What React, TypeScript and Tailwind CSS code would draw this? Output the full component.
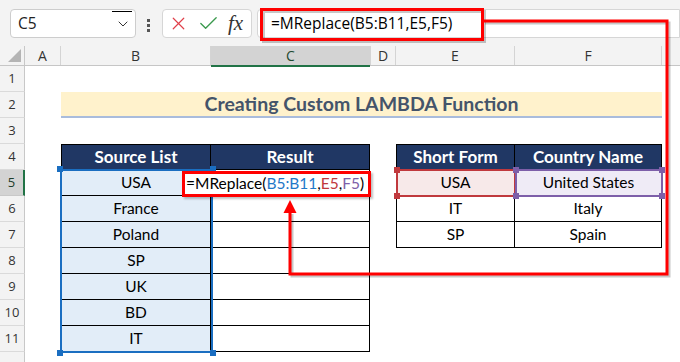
import { ChevronDown, X, Check } from "lucide-react"

// one spreadsheet row: header cell + cells
function Row({ n, active, children, h = "h-[26px]" }: { n?: number; active?: boolean; children?: React.ReactNode; h?: string }) {
  return (
    <div className={`flex ${h}`}>
      <div
        className={
          active
            ? "w-[25px] h-full flex items-center justify-center text-[13px] text-[#1f3d2b] bg-[#d3d3d3] border-r-2 border-r-[#217346] border-b border-b-[#c8c8c8] font-[family-name:Open_Sans,sans-serif]"
            : "w-[25px] h-full flex items-center justify-center text-[13px] text-[#333] bg-[#f3f3f3] border-r border-r-[#c8c8c8] border-b border-b-[#dadada] font-[family-name:Open_Sans,sans-serif]"
        }
      >
        {n}
      </div>
      {children}
    </div>
  )
}

const A = <div className="w-[36px] h-full" />
const D = <div className="w-[26px] h-full" />

function BCell({ text, head }: { text?: string; head?: boolean }) {
  if (head)
    return (
      <div className="w-[150px] h-full flex items-center justify-center bg-[#203764] text-white font-bold text-[17px] border border-black">
        {text}
      </div>
    )
  return (
    <div className="w-[150px] h-full flex items-center justify-center bg-[#e2edf8] text-[15.5px] text-black border-l border-r border-b border-black">
      {text}
    </div>
  )
}

function CCell({ head }: { head?: boolean }) {
  if (head)
    return (
      <div className="w-[159px] h-full flex items-center justify-center bg-[#203764] text-white font-bold text-[17px] border-t border-r border-b border-black">
        Result
      </div>
    )
  return <div className="w-[159px] h-full border-r border-b border-black" />
}

function ECell({ text, head }: { text: string; head?: boolean }) {
  if (head)
    return (
      <div className="w-[119px] h-full flex items-center justify-center bg-[#203764] text-white font-bold text-[17px] border border-black">
        {text}
      </div>
    )
  return (
    <div className="w-[119px] h-full flex items-center justify-center text-[15.5px] text-black border-l border-r border-b border-black">
      {text}
    </div>
  )
}

function FCell({ text, head }: { text: string; head?: boolean }) {
  if (head)
    return (
      <div className="w-[147px] h-full flex items-center justify-center bg-[#203764] text-white font-bold text-[17px] border-t border-r border-b border-black">
        {text}
      </div>
    )
  return (
    <div className="w-[147px] h-full flex items-center justify-center text-[15.5px] text-black border-r border-b border-black">
      {text}
    </div>
  )
}

function Handle({ cls, color }: { cls: string; color: string }) {
  return <div className={`absolute w-[6px] h-[6px] ${cls}`} style={{ background: color }} />
}

export default function App() {
  const source = ["France", "Poland", "SP", "UK", "BD", "IT"]
  const short = [
    ["IT", "Italy"],
    ["SP", "Spain"],
  ]

  return (
    <div className="relative w-[680px] h-[362px] overflow-hidden bg-white font-[family-name:Lato,sans-serif]">
      {/* Toolbar */}
      <div className="h-[46px] bg-[#f3f3f3] flex items-start pt-[9px] pl-[10px] font-[family-name:Open_Sans,sans-serif]">
        <div className="relative w-[126px] h-[29px] rounded-[4px] border border-[#cdcdcd] bg-white flex items-center justify-between pl-[7px] pr-[4px]">
          <span className="text-[15.5px] text-[#222]">C5</span>
          <ChevronDown size={16} strokeWidth={1.5} className="text-[#333]" />
          <div className="absolute top-[1px] right-[3px] w-[20px] h-[1px] bg-black" />
        </div>
        <div className="ml-[11px] mt-[10px] flex flex-col gap-[2px]">
          <div className="w-[3px] h-[3px] bg-[#555]" />
          <div className="w-[3px] h-[3px] bg-[#555]" />
          <div className="w-[3px] h-[3px] bg-[#555]" />
        </div>
        <div className="ml-[12px] w-[90px] h-[29px] rounded-[4px] border border-[#d6d6d6] bg-white flex items-center pl-[5px]">
          <X size={21} strokeWidth={1.4} className="text-[#e0404a]" />
          <Check size={23} strokeWidth={1.4} className="ml-[8px] text-[#3c9a4f]" />
          <span className="ml-[8px] italic text-[21px] text-[#333] font-[family-name:Liberation_Serif,serif] leading-none">fx</span>
        </div>
        <div className="ml-[5px] flex-1 h-[29px] rounded-l-[4px] border border-[#d6d6d6] bg-white flex items-center pl-[13px] text-[15.5px] text-black">
          =MReplace(B5:B11,E5,F5)
        </div>
      </div>

      {/* Column headers */}
      <div className="flex h-[20px] bg-[#f3f3f3] border-b border-[#c6c6c6] text-[14px] text-[#333] font-[family-name:Open_Sans,sans-serif]">
        <div className="w-[25px] h-full border-r border-[#c8c8c8] flex items-end justify-end pr-[3px] pb-[3px]">
          <svg width="13" height="13" viewBox="0 0 13 13">
            <polygon points="13,0 13,13 0,13" fill="#b4b4b4" />
          </svg>
        </div>
        <div className="w-[36px] h-full border-r border-[#d4d4d4] flex items-center justify-center">A</div>
        <div className="w-[150px] h-full border-r border-[#d4d4d4] flex items-center justify-center">B</div>
        <div className="w-[159px] h-[21px] bg-[#d3d3d3] border-b-2 border-[#217346] flex items-center justify-center text-[#1f4a30]">C</div>
        <div className="w-[26px] h-full border-l border-r border-[#d4d4d4] flex items-center justify-center">D</div>
        <div className="w-[119px] h-full border-r border-[#d4d4d4] flex items-center justify-center">E</div>
        <div className="w-[147px] h-full border-r border-[#d4d4d4] flex items-center justify-center">F</div>
        <div className="flex-1" />
      </div>

      {/* Rows */}
      <Row n={1} />
      <Row n={2}>
        {A}
        <div className="w-[601px] h-full bg-[#fff2cc] border-b-2 border-[#a9bcdc] flex items-center justify-center text-[19.5px] font-bold text-[#44546a]">
          Creating Custom LAMBDA Function
        </div>
      </Row>
      <Row n={3} />
      <Row n={4}>
        {A}
        <BCell text="Source List" head />
        <CCell head />
        {D}
        <ECell text="Short Form" head />
        <FCell text="Country Name" head />
      </Row>
      <Row n={5} active>
        {A}
        <BCell text="USA" />
        <CCell />
        {D}
        <div className="w-[119px] h-full flex items-center justify-center text-[15.5px] text-black bg-[#f7e9e9]">USA</div>
        <div className="w-[147px] h-full flex items-center justify-center text-[15.5px] text-black bg-[#efebf6]">United States</div>
      </Row>
      {source.map((s, i) => (
        <Row key={s} n={6 + i}>
          {A}
          <BCell text={s} />
          <CCell />
          {i < 2 && (
            <>
              {D}
              <ECell text={short[i]![0]!} />
              <FCell text={short[i]![1]!} />
            </>
          )}
        </Row>
      ))}
      <Row h="h-[26px]" />

      {/* Selection B5:B11 */}
      <div className="absolute left-[60px] top-[169px] w-[153px] h-[184px] border-2 border-[#1a6ec1] pointer-events-none">
        <Handle cls="-left-[5px] -top-[5px]" color="#1a6ec1" />
        <Handle cls="-right-[5px] -top-[5px]" color="#1a6ec1" />
        <Handle cls="-left-[5px] -bottom-[5px]" color="#1a6ec1" />
        <Handle cls="-right-[5px] -bottom-[5px]" color="#1a6ec1" />
      </div>

      {/* E5 reference */}
      <div className="absolute left-[396px] top-[169px] w-[120px] h-[28px] border-2 border-[#c0393d] pointer-events-none">
        <Handle cls="-left-[4px] -top-[4px]" color="#c0393d" />
        <Handle cls="-left-[4px] -bottom-[4px]" color="#c0393d" />
      </div>
      {/* F5 reference */}
      <div className="absolute left-[515px] top-[169px] w-[148px] h-[28px] border-2 border-[#7d5fa9] pointer-events-none">
        <Handle cls="-left-[4px] -top-[4px]" color="#7d5fa9" />
        <Handle cls="-right-[4px] -top-[4px]" color="#7d5fa9" />
        <Handle cls="-left-[4px] -bottom-[4px]" color="#7d5fa9" />
        <Handle cls="-right-[4px] -bottom-[4px]" color="#7d5fa9" />
      </div>

      {/* C5 in edit mode */}
      <div className="absolute left-[182px] top-[171px] w-[189px] h-[26px] bg-white border-[3px] border-[#ff0000] shadow-[2px_2px_2px_rgba(0,0,0,0.25)] flex items-center pl-[1px] text-[15.5px] text-black whitespace-nowrap">
        =MReplace(<span className="text-[#1f78c8]">B5:B11</span>,<span className="text-[#c0393d]">E5</span>,<span className="text-[#7d5fa9]">F5</span>)
      </div>

      {/* Callout arrow + formula highlight */}
      <svg className="absolute inset-0 pointer-events-none" width="680" height="362" viewBox="0 0 680 362">
        <g stroke="rgba(0,0,0,0.22)" strokeWidth="3" fill="none" transform="translate(2,2)">
          <rect x="261.5" y="9.5" width="221" height="30" />
          <path d="M483 21 H667 V274 H290 V212" />
        </g>
        <rect x="261.5" y="9.5" width="221" height="30" stroke="#ff0000" strokeWidth="3" fill="none" />
        <path d="M483 21 H667 V274 H290 V212" stroke="#ff0000" strokeWidth="3" fill="none" />
        <polygon points="283.5,213 296.5,213 290,200" fill="#ff0000" />
      </svg>
    </div>
  )
}
